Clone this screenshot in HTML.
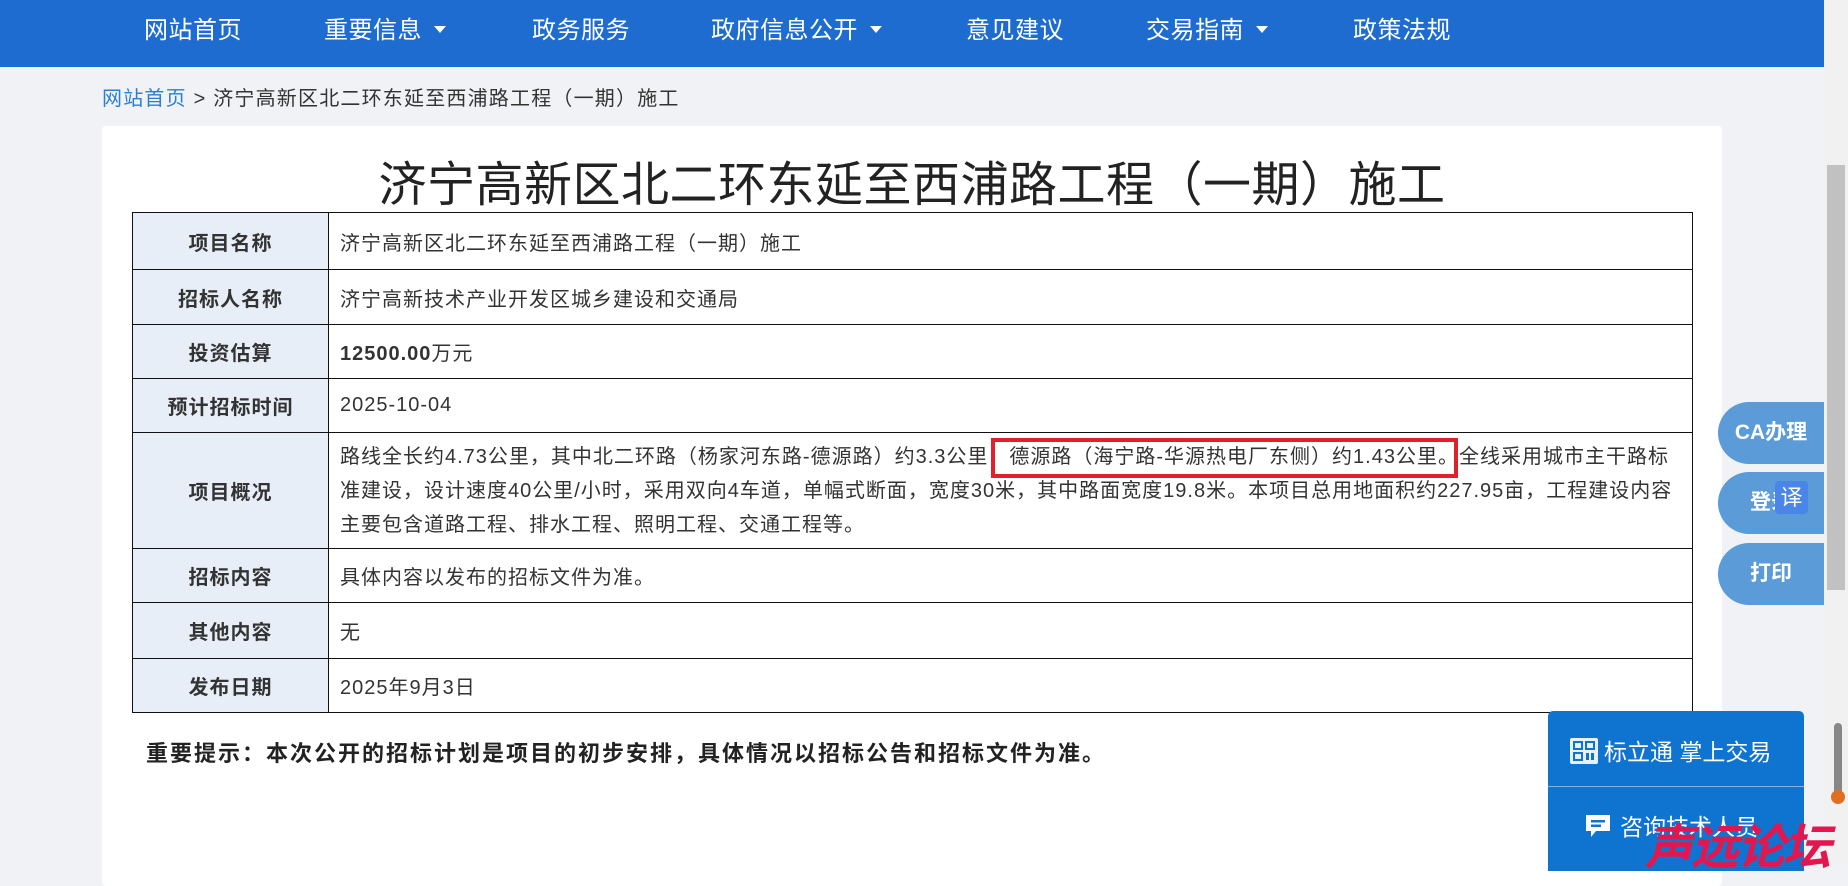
<!DOCTYPE html>
<html><head><meta charset="utf-8"><style>
*{margin:0;padding:0;box-sizing:border-box}
body{width:1848px;height:863px;overflow:hidden;background:#f0f2f5;font-family:"Liberation Sans","Noto Sans CJK SC",sans-serif;color:#333;position:relative}
.nav{position:absolute;left:0;top:0;width:1824px;height:67px;background:#1e6ccf}
.nav span{position:absolute;top:0;line-height:62px;color:#fff;font-size:24px;letter-spacing:0.5px}
.nav i{display:inline-block;width:0;height:0;border-left:6px solid transparent;border-right:6px solid transparent;border-top:7px solid #fff;margin-left:12px;vertical-align:middle;position:relative;top:-2px}
.bc{position:absolute;left:102px;top:82px;font-size:20px;color:#333;letter-spacing:1.2px}
.bc a{color:#2c7fd0;text-decoration:none}
.card{position:absolute;left:102px;top:126px;width:1620px;height:760px;background:#fff;border-radius:4px}
h1{position:absolute;left:102px;width:1620px;top:154px;text-align:center;font-size:48px;font-weight:normal;color:#222;line-height:64px;letter-spacing:0.5px}
table{position:absolute;left:132px;top:212px;width:1561px;border-collapse:collapse;font-size:20px;letter-spacing:1px}
td{border:1.5px solid #111;padding:0 11px;color:#333}
td.l{width:196px;background:#e8eef8;text-align:center;font-weight:bold;color:#333}
.ov{line-height:34px;padding-top:4px;padding-bottom:4px}
.red{position:absolute;left:991px;top:438px;width:467px;height:40px;border:4px solid #e0202a}
.note{position:absolute;left:146px;top:736px;font-size:22px;font-weight:bold;color:#222;letter-spacing:2px}
.sb{position:absolute;right:0;top:0;width:24px;height:863px;background:#f1f1f1}
.sb div{position:absolute;left:3px;top:165px;width:18px;height:425px;background:#c1c1c1}
.fb{position:absolute;left:1718px;width:106px;height:62px;background:#5b9bd8;border-radius:31px 0 0 31px;color:#fff;font-weight:bold;font-size:21px;text-align:center;line-height:62px}
.pn{position:absolute;left:1548px;top:711px;width:256px;height:160px;background:#0f74d0;border-radius:5px 5px 0 0;color:#fff;font-size:23px}
.pn .a{position:absolute;left:22px;top:22px}
.pn .d{position:absolute;left:0;top:75px;width:256px;height:1px;background:#7fb6ea}
.pn .b{position:absolute;left:36px;top:97px}
.wm{position:absolute;left:1645px;top:808px;font-size:48px;font-weight:bold;font-style:italic;color:#e3174f;letter-spacing:-2px}
</style></head><body>
<div class="nav">
<span style="left:144px">网站首页</span>
<span style="left:324px">重要信息<i></i></span>
<span style="left:532px">政务服务</span>
<span style="left:711px">政府信息公开<i></i></span>
<span style="left:966px">意见建议</span>
<span style="left:1146px">交易指南<i></i></span>
<span style="left:1353px">政策法规</span>
</div>
<div class="bc"><a>网站首页</a> &gt; 济宁高新区北二环东延至西浦路工程（一期）施工</div>
<div class="card"></div>
<h1>济宁高新区北二环东延至西浦路工程（一期）施工</h1>
<table>
<tr style="height:57px"><td class="l">项目名称</td><td>济宁高新区北二环东延至西浦路工程（一期）施工</td></tr>
<tr style="height:55px"><td class="l">招标人名称</td><td>济宁高新技术产业开发区城乡建设和交通局</td></tr>
<tr style="height:54px"><td class="l">投资估算</td><td><b>12500.00</b>万元</td></tr>
<tr style="height:54px"><td class="l">预计招标时间</td><td>2025-10-04</td></tr>
<tr style="height:116px"><td class="l">项目概况</td><td class="ov">路线全长约4.73公里，其中北二环路（杨家河东路-德源路）约3.3公里，德源路（海宁路-华源热电厂东侧）约1.43公里。全线采用城市主干路标准建设，设计速度40公里/小时，采用双向4车道，单幅式断面，宽度30米，其中路面宽度19.8米。本项目总用地面积约227.95亩，工程建设内容主要包含道路工程、排水工程、照明工程、交通工程等。</td></tr>
<tr style="height:54px"><td class="l">招标内容</td><td>具体内容以发布的招标文件为准。</td></tr>
<tr style="height:56px"><td class="l">其他内容</td><td>无</td></tr>
<tr style="height:54px"><td class="l">发布日期</td><td>2025年9月3日</td></tr>
</table>
<div class="red"></div>
<div class="note">重要提示：本次公开的招标计划是项目的初步安排，具体情况以招标公告和招标文件为准。</div>
<div class="sb"><div></div></div>
<div class="fb" style="top:402px">CA办理</div>
<div class="fb" style="top:472px">登录</div>
<div style="position:absolute;left:1775px;top:481px;width:33px;height:33px;background:#4a86e8;border-radius:4px;color:#fff;font-size:22px;text-align:center;line-height:33px">译</div>
<div class="fb" style="top:543px">打印</div>
<div class="pn">
<div class="a"><svg width="28" height="26" viewBox="0 0 28 26" style="vertical-align:-4px;margin-right:6px"><rect width="28" height="26" rx="2" fill="#e8f1fb"/><rect x="4" y="4" width="8" height="7" fill="none" stroke="#0f74d0" stroke-width="2"/><rect x="16" y="4" width="8" height="7" fill="none" stroke="#0f74d0" stroke-width="2"/><rect x="4" y="15" width="8" height="7" fill="none" stroke="#0f74d0" stroke-width="2"/><rect x="16" y="15" width="3" height="7" fill="#0f74d0"/><rect x="21" y="15" width="3" height="7" fill="#0f74d0"/></svg>标立通 掌上交易</div>
<div class="d"></div>
<div class="b"><svg width="28" height="26" viewBox="0 0 28 26" style="vertical-align:-4px;margin-right:8px"><path d="M2 2h24v16H12l-5 6v-6H2z" fill="#fff"/><rect x="7" y="7" width="14" height="2.5" fill="#0f74d0"/><rect x="7" y="11.5" width="10" height="2.5" fill="#0f74d0"/></svg>咨询技术人员</div>
</div>
<div style="position:absolute;left:1834px;top:723px;width:8px;height:75px;background:#888;border-radius:4px"></div>
<div style="position:absolute;left:1831px;top:790px;width:14px;height:14px;background:#e07020;border-radius:50%"></div>
<div class="wm">声远论坛</div>
</body></html>
